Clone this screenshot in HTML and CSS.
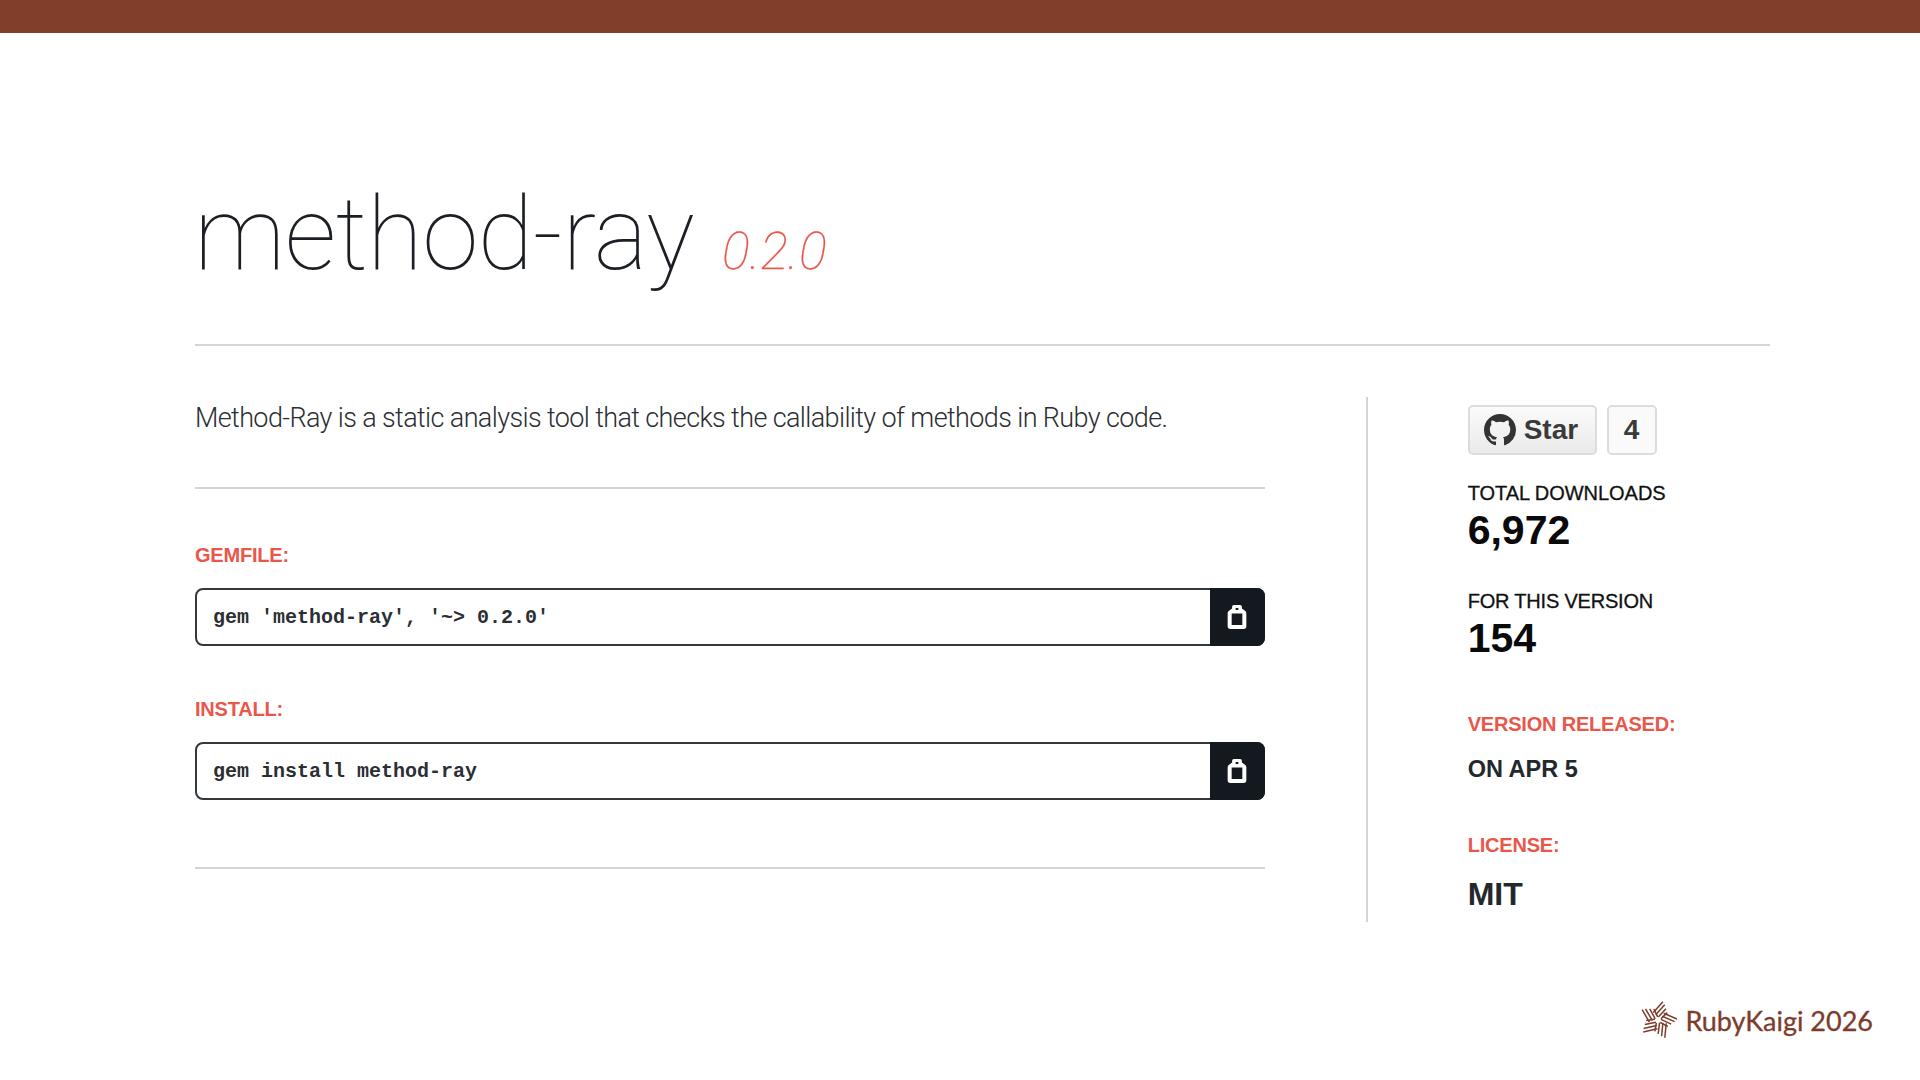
FILE: index.html
```html
<!DOCTYPE html>
<html lang="en">
<head>
  <meta charset="UTF-8" />
  <title>method-ray</title>
  <link rel="stylesheet" href="styles.css">
</head>
<body>
  <div class="top-bar"></div>

  <div class="page">
    <header class="title-row">
      <h1>method-ray</h1>
      <i class="version">0.2.0</i>
    </header>

    <div class="columns">
      <main class="left">
        <p class="desc">Method-Ray is a static analysis tool that checks the callability of methods in Ruby code.</p>

        <div class="install-area">
          <h2 class="label">GEMFILE:</h2>
          <div class="copy-box">
            <code>gem 'method-ray', '~&gt; 0.2.0'</code>
            <button class="copy-btn">
              <svg width="20" height="24" viewBox="0 0 21 27"><path fill="#fff" fill-rule="evenodd" d="M7 0h7a2 2 0 0 1 2 2v2l3.800 2.800A3 3 0 0 1 21 9.200V24a3 3 0 0 1-3 3H3a3 3 0 0 1-3-3V9.200a3 3 0 0 1 1.200-2.400L5 4V2a2 2 0 0 1 2-2zM9 3.500v2h3v-2zM4.500 9.500v13h12v-13z"/></svg>
            </button>
          </div>
          <h2 class="label">INSTALL:</h2>
          <div class="copy-box">
            <code>gem install method-ray</code>
            <button class="copy-btn">
              <svg width="20" height="24" viewBox="0 0 21 27"><path fill="#fff" fill-rule="evenodd" d="M7 0h7a2 2 0 0 1 2 2v2l3.800 2.800A3 3 0 0 1 21 9.200V24a3 3 0 0 1-3 3H3a3 3 0 0 1-3-3V9.200a3 3 0 0 1 1.200-2.400L5 4V2a2 2 0 0 1 2-2zM9 3.500v2h3v-2zM4.500 9.500v13h12v-13z"/></svg>
            </button>
          </div>
        </div>
      </main>

      <aside class="side">
        <div class="github">
          <span class="star-btn">
            <svg width="32" height="32" viewBox="0 0 16 16"><path fill="#333" d="M8 0C3.580 0 0 3.580 0 8c0 3.540 2.290 6.530 5.470 7.590.4.070.55-.17.55-.38 0-.19-.01-.82-.01-1.490-2.010.37-2.530-.49-2.690-.94-.09-.23-.48-.94-.82-1.130-.28-.15-.68-.52-.01-.53.630-.01 1.080.58 1.230.82.720 1.210 1.870.87 2.330.66.070-.52.280-.87.510-1.070-1.780-.2-3.640-.89-3.640-3.950 0-.87.310-1.590.820-2.150-.08-.2-.36-1.020.08-2.120 0 0 .67-.21 2.200.82.640-.18 1.320-.27 2-.27s1.360.09 2 .27c1.530-1.040 2.200-.82 2.200-.82.440 1.100.160 1.920.08 2.120.51.560.82 1.270.82 2.150 0 3.070-1.870 3.750-3.650 3.950.29.250.54.730.54 1.480 0 1.070-.01 1.930-.01 2.200 0 .21.150.46.550.38A8.010 8.010 0 0 0 16 8c0-4.420-3.580-8-8-8z"/></svg>
            Star
          </span>
          <span class="star-count">4</span>
        </div>

        <div class="stat stat-total">
          <h3>TOTAL DOWNLOADS</h3>
          <strong>6,972</strong>
        </div>
        <div class="stat stat-version">
          <h3>FOR THIS VERSION</h3>
          <strong>154</strong>
        </div>

        <h2 class="label label-released">VERSION RELEASED:</h2>
        <p class="released">ON APR 5</p>
        <h2 class="label label-license">LICENSE:</h2>
        <p class="license">MIT</p>
      </aside>
    </div>
  </div>

  <footer class="brand">
    <svg class="brand-mark" width="40" height="42" viewBox="-20 -21 40 42" fill="none" stroke="#7d3c2b" stroke-width="1.500">
      <defs>
        <path id="blade" d="M0 -19L-6.500 -6M2.500 -16.500L-3.500 -4.500M4.800 -13L-.5 -3M7 -9.500L2.500 -2"/>
      </defs>
      <use href="#blade" transform="rotate(15)"/>
      <use href="#blade" transform="rotate(87)"/>
      <use href="#blade" transform="rotate(159)"/>
      <use href="#blade" transform="rotate(231)"/>
      <use href="#blade" transform="rotate(303)"/>
    </svg>
    <span>RubyKaigi 2026</span>
  </footer>
</body>
</html>
```

FILE: styles.css
```css
html, body {
  margin: 0;
  padding: 0;
}

body {
  width: 1920px;
  height: 1080px;
  overflow: hidden;
  display: flex;
  flex-direction: column;
  background-color: #fff;
  color: #1b1f24;
  font-family: "Liberation Sans", Arial, sans-serif;
}

.top-bar {
  height: 33px;
  background-color: #813f2b;
}

.page {
  margin: 0 150px 0 195px;
}

.title-row {
  display: flex;
  align-items: baseline;
  gap: 28px;
  height: 313px;
  box-sizing: border-box;
  padding-top: 137px;
  border-bottom: 2px solid #d4d6d6;
}

h1 {
  margin: 0 0 0 -1px;
  font-family: Roboto, sans-serif;
  font-weight: 100;
  font-size: 102px;
  line-height: 128px;
  letter-spacing: -0.7px;
}

.version {
  font-family: Roboto, sans-serif;
  font-weight: 100;
  font-size: 52px;
  color: #e9574a;
  -webkit-text-stroke: 0.3px #e9574a;
}

.columns {
  display: flex;
  margin-top: 51px;
}

.left {
  width: 1072px;
}

.desc {
  margin: 0;
  height: 92px;
  padding-top: 3px;
  box-sizing: border-box;
  border-bottom: 2px solid #d4d6d6;
  font-family: Roboto, sans-serif;
  font-weight: 300;
  font-size: 27px;
  line-height: 36px;
  letter-spacing: -0.62px;
  color: #2b2f33;
}

.install-area {
  height: 380px;
  padding-top: 54px;
  box-sizing: border-box;
  border-bottom: 2px solid #d4d6d6;
}

.label {
  margin: 0;
  font-size: 20px;
  line-height: 24px;
  font-weight: 700;
  letter-spacing: -0.2px;
  color: #e9574a;
}

.copy-box {
  display: flex;
  height: 58px;
  box-sizing: border-box;
  margin: 21px 0 51px;
  border: 2px solid #33383d;
  border-radius: 8px;
}

.copy-box code {
  flex: 1;
  padding-left: 16px;
  font-family: "Liberation Mono", monospace;
  font-weight: 700;
  font-size: 20px;
  line-height: 56px;
  color: #2b2f33;
}

.copy-btn {
  width: 55px;
  margin: -2px;
  padding: 0;
  display: flex;
  align-items: center;
  justify-content: center;
  border: none;
  border-radius: 0 8px 8px 0;
  background-color: #14191f;
}

.side {
  width: 303px;
  margin-left: 101px;
  border-left: 2px solid #d4d6d6;
  padding-left: 100px;
  padding-top: 8px;
  height: 517px;
}

.github {
  display: flex;
  gap: 10px;
  height: 50px;
}

.star-btn, .star-count {
  display: flex;
  align-items: center;
  box-sizing: border-box;
  height: 50px;
  border: 2px solid #dcdcdc;
  border-radius: 5px;
  font-weight: 700;
  font-size: 28px;
  color: #3a3a3a;
}

.star-btn {
  width: 129px;
  gap: 8px;
  padding-left: 14px;
  background: linear-gradient(#fbfbfb, #eaeaea);
}

.star-count {
  width: 50px;
  justify-content: center;
  background-color: #fafafa;
}

.stat h3 {
  margin: 0;
  font-size: 20px;
  line-height: 24px;
  font-weight: 400;
  letter-spacing: -0.04px;
  color: #111;
  -webkit-text-stroke: 0.3px #111;
}

.stat-version h3 {
  letter-spacing: -0.2px;
}

.stat strong {
  display: block;
  margin-top: 2px;
  font-size: 41px;
  line-height: 46px;
  color: #0a0a0a;
}

.stat-total {
  margin-top: 26px;
}

.stat-version {
  margin-top: 36px;
}

.label-released {
  margin-top: 51px;
}

.released {
  margin: 18px 0 0;
  font-size: 23.500px;
  line-height: 30px;
  font-weight: 700;
  color: #23282d;
}

.label-license {
  margin-top: 49px;
}

.license {
  margin: 19px 0 0;
  font-size: 32px;
  line-height: 36px;
  font-weight: 700;
  color: #23282d;
}

.brand {
  margin-top: auto;
  margin-bottom: 39px;
  margin-right: 47px;
  display: flex;
  align-items: center;
  justify-content: flex-end;
  gap: 7px;
  font-family: Lato, sans-serif;
  font-size: 27px;
  color: #7d3c2b;
  -webkit-text-stroke: 0.3px #7d3c2b;
}
```
